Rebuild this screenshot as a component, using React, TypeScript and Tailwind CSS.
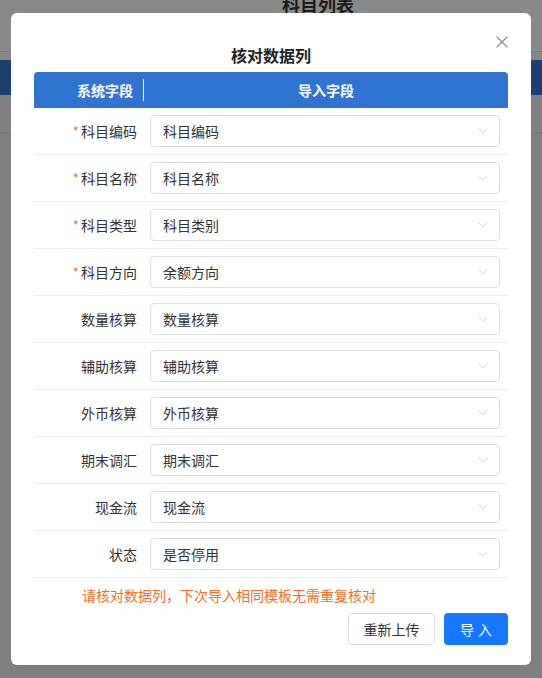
import { ChevronDown, X } from "lucide-react";

const rows = [
  { label: "科目编码", value: "科目编码", required: true },
  { label: "科目名称", value: "科目名称", required: true },
  { label: "科目类型", value: "科目类别", required: true },
  { label: "科目方向", value: "余额方向", required: true },
  { label: "数量核算", value: "数量核算" },
  { label: "辅助核算", value: "辅助核算" },
  { label: "外币核算", value: "外币核算" },
  { label: "期末调汇", value: "期末调汇" },
  { label: "现金流", value: "现金流" },
  { label: "状态", value: "是否停用" },
];

const font = { fontFamily: '"Noto Sans CJK SC", "Noto Sans", sans-serif' };

export default function App() {
  return (
    <div className="relative w-[542px] h-[678px] overflow-hidden bg-[#7f7f7f]" style={font}>
      {/* Page behind the mask */}
      <div className="h-[52px] bg-[#898989] border-b border-[#7c7c7c] flex justify-center">
        <span className="text-[18px] font-bold text-[#1a1a1a] leading-none -mt-[5px] ml-[94px]">科目列表</span>
      </div>
      <div className="h-[8px] bg-[#858585]" />
      <div className="h-[35px] bg-[#1d3f6f]" />
      <div className="h-[38px] bg-[#818181] border-b border-[#767676]" />

      {/* Dialog */}
      <div className="absolute left-[11px] top-[13px] w-[520px] h-[652px] bg-white rounded-[6px] px-[23px] pt-[30px]">
        <button className="absolute right-[19px] top-[19px] text-[#8c8c8c]">
          <X size={20} strokeWidth={1.4} />
        </button>
        <h2 className="text-center text-[16px] font-bold text-[#222] leading-[24px]">核对数据列</h2>

        <div className="mt-[5px] h-[36px] bg-[#2f74d0] rounded-t-[4px] flex items-center text-white text-[14px] font-bold">
          <div className="w-[110px] h-[22px] pr-[10px] flex items-center justify-end border-r border-white">系统字段</div>
          <div className="flex-1 text-center">导入字段</div>
        </div>

        {rows.map((r) => (
          <div key={r.label} className="h-[47px] flex items-center border-b border-[#ebeef5]">
            <div className="w-[116px] pr-[13px] text-right text-[14px] text-[#333]">
              {r.required && <span className="text-[#e8803f] mr-[2px]">*</span>}
              {r.label}
            </div>
            <div className="w-[350px] h-[32px] border border-[#dcdfe6] rounded-[4px] flex items-center justify-between pl-[12px] pr-[8px] text-[14px] text-[#333]">
              <span>{r.value}</span>
              <ChevronDown size={16} strokeWidth={1} className="text-[#c0c4cc]" />
            </div>
          </div>
        ))}

        <p className="mt-[6px] pl-[48px] text-[14px] text-[#f0702a] leading-[22px]">
          请核对数据列，下次导入相同模板无需重复核对
        </p>

        <div className="mt-[7px] flex justify-end gap-[9px]">
          <button className="w-[87px] h-[32px] border border-[#dcdfe6] rounded-[4px] text-[14px] text-[#333] bg-white">
            重新上传
          </button>
          <button className="w-[64px] h-[32px] rounded-[4px] text-[14px] text-white bg-[#1677ff] tracking-[4px] pl-[4px]">
            导入
          </button>
        </div>
      </div>
    </div>
  );
}
